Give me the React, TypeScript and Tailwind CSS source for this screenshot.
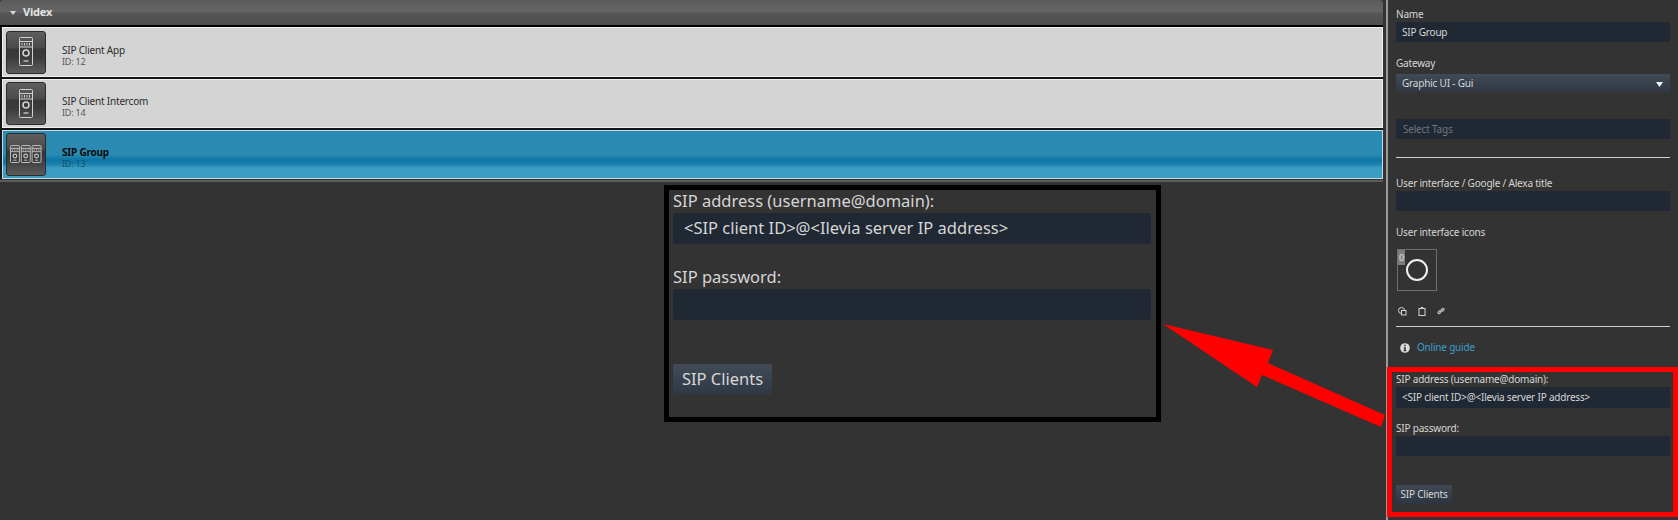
import React from "react";

function Single() {
  return (
    <svg width="16" height="30" viewBox="0 0 16 30" fill="none" stroke="#d0d0d0" strokeWidth="1">
      <rect x="1.5" y="0.5" width="13" height="28" rx="1" />
      <path d="M1.5 4.5h13M1.5 10h13" />
      <path d="M4 6v2.5M6.5 6v2.5M9 6v2.5M11.5 6v2.5" />
      <circle cx="8" cy="16" r="3" strokeWidth="1.6" />
      <path d="M5.5 24h5" strokeWidth="1.3" />
    </svg>
  );
}

function Group() {
  return (
    <svg width="32" height="19" viewBox="0 0 34 20" fill="none" stroke="#c4c4c4" strokeWidth="1">
      {[0, 11.5, 23].map((x) => (
        <g key={x} transform={`translate(${x} 0)`}>
          <rect x="0.5" y="0.5" width="9.5" height="18" rx="1" />
          <path d="M0.5 3.5h9.5M0.5 7h9.5M2.5 4.5v1.5M5 4.5v1.5M7.5 4.5v1.5" />
          <circle cx="5.2" cy="11.5" r="2" strokeWidth="1.3" />
          <path d="M3.5 16h3.5" />
        </g>
      ))}
    </svg>
  );
}

function Tile({ children }: { children: React.ReactNode }) {
  return (
    <div className="flex h-[43px] w-[40px] shrink-0 items-center justify-center rounded-[3px] border border-[#2b2b2b] bg-[linear-gradient(180deg,#5e5e5e_0%,#4a4a4a_38%,#383838_42%,#3a3a3a_60%,#5c5c5c_100%)]">
      {children}
    </div>
  );
}

function Row({ name, id, icon, active, h, mt }: { name: string; id: string; icon: React.ReactNode; active?: boolean; h: string; mt: string }) {
  return (
    <div
      className={
        active
          ? `flex ${h} items-center border border-[#c4dbe6] bg-[linear-gradient(180deg,#2b8bb3_0%,#2a8ab2_50%,#0c76a6_62%,#1a80ad_70%,#3a9bc0_78%,#3c9cc1_100%)] pl-[3px]`
          : `flex ${h} items-center border border-[#f0f0f0] bg-[#d4d4d4] pl-[3px]`
      }
    >
      <Tile>{icon}</Tile>
      <div className={`${mt} ml-4 flex flex-col`}>
        <span className={active ? "text-[10px] leading-[12px] font-bold text-[#0a0a0a]" : "text-[10px] leading-[12px] text-[#2c2c2c]"}>{name}</span>
        <span className={active ? "text-[9px] leading-[12px] text-[#12506f]" : "text-[9px] leading-[12px] text-[#555555]"}>{id}</span>
      </div>
    </div>
  );
}

function Field({ children, cls }: { children?: React.ReactNode; cls: string }) {
  return <div className={`flex items-center rounded-[1px] bg-[#202833] ${cls}`}>{children}</div>;
}

export default function App() {
  return (
    <div className="relative flex h-[520px] w-[1678px] overflow-hidden bg-[#333333] font-['Noto_Sans',sans-serif] tracking-[-0.2px]">
      <main className="flex w-[1385px] shrink-0 flex-col pr-[2px]">
        <div className="flex h-[25px] items-center rounded-t-[3px] bg-[linear-gradient(180deg,#5a5a5a_0%,#666666_48%,#565656_52%,#4e4e4e_100%)] pl-[10px]">
          <svg width="6" height="4" viewBox="0 0 6 4">
            <path d="M0 0h6L3 4z" fill="#d8d8d8" />
          </svg>
          <span className="ml-[7px] text-[11px] font-bold text-[#e4e4e4]">Videx</span>
        </div>
        <div className="flex flex-col gap-[2px] border-t-[2px] border-black bg-[#151515] pl-[2px]">
          <Row name="SIP Client App" id="ID: 12" icon={<Single />} h="h-[50px]" mt="mt-[8px]" />
          <Row name="SIP Client Intercom" id="ID: 14" icon={<Single />} h="h-[49px]" mt="mt-[6px]" />
          <Row name="SIP Group" id="ID: 13" icon={<Group />} h="h-[49px]" mt="mt-[6px]" active />
        </div>
        <div className="mt-px h-[2px] bg-[#5c5c5c]" />
      </main>

      <aside className="ml-px flex w-[292px] shrink-0 flex-col border-l-2 border-[#9a9a9a]">
        <div className="flex flex-col pr-2 pl-[8px] text-[10px] text-[#d6d6d6]">
          <span className="mt-[7px] leading-[15px]">Name</span>
          <Field cls="h-[20px] pl-[6px]">SIP Group</Field>
          <span className="mt-[14px] leading-[15px]">Gateway</span>
          <div className="mt-[3px] flex h-[18px] items-center justify-between bg-gradient-to-b from-[#414b56] to-[#2f3843] pr-[7px] pl-[6px]">
            <span>Graphic UI - Gui</span>
            <svg width="7" height="5" viewBox="0 0 7 5" className="mt-[3px]">
              <path d="M0 0h7L3.5 5z" fill="#f2f2f2" />
            </svg>
          </div>
          <Field cls="mt-[27px] h-[20px] pl-[7px] text-[#70767d]">Select Tags</Field>
          <div className="mt-[18px] h-px bg-[#d0d0d0]" />
          <span className="mt-[18px] leading-[15px]">User interface / Google / Alexa title</span>
          <Field cls="h-[20px]" />
          <span className="mt-[14px] leading-[15px]">User interface icons</span>
          <div className="relative mt-[9px] ml-px flex h-[42px] w-[40px] items-center justify-center border border-[#6e6e6e]">
            <span className="absolute top-0 left-0 flex h-[15px] w-[7px] items-center justify-center bg-[#7d7d7d] text-[9px] text-[#e4e4e4]">0</span>
            <span className="h-[22px] w-[22px] rounded-full border-2 border-[#f0f0f0]" />
          </div>
          <div className="mt-[14px] ml-[2px] flex h-[12px] items-center gap-[11px]">
            <svg width="9" height="9" viewBox="0 0 9 9" fill="none" stroke="#d4d4d4" strokeWidth="1">
              <circle cx="3.5" cy="3.5" r="3" />
              <rect x="3.5" y="3.5" width="4.5" height="4.5" fill="#333333" />
            </svg>
            <svg width="8" height="9" viewBox="0 0 8 9" fill="none" stroke="#d4d4d4" strokeWidth="1">
              <rect x="1" y="1.5" width="6" height="7" />
              <path d="M3 .5h2v1H3z" fill="#d4d4d4" />
            </svg>
            <svg width="8" height="8" viewBox="0 0 8 8" fill="none" stroke="#b4b4b4" strokeWidth="1.3">
              <path d="M2.6 5.4l2.8-2.8" />
              <rect x="0.9" y="4.2" width="3" height="2" rx="1" transform="rotate(-45 2.4 5.2)" />
              <rect x="4.1" y="1.8" width="3" height="2" rx="1" transform="rotate(-45 5.6 2.8)" />
            </svg>
          </div>
          <div className="mt-[9px] h-px bg-[#d0d0d0]" />
          <div className="mt-[13px] ml-[4px] flex h-[15px] items-center gap-[7px]">
            <svg width="10" height="10" viewBox="0 0 10 10">
              <circle cx="5" cy="5" r="4.8" fill="#dcdcdc" />
              <path d="M4.2 1.8h1.6v1.5H4.2zM3.6 4.2h2.2v3h.6v1H3.6v-1h.6v-2h-.6z" fill="#333333" />
            </svg>
            <span className="text-[#3d9dd0]">Online guide</span>
          </div>
        </div>

        <section className="mt-[12px] -ml-px flex h-[150px] flex-col border-[5px] border-[#ff0000] pr-[3px] pl-[4px] text-[10px] text-[#d6d6d6]">
          <span className="leading-[15px]">SIP address (username@domain):</span>
          <Field cls="h-[21px] pl-[6px]">&lt;SIP client ID&gt;@&lt;Ilevia server IP address&gt;</Field>
          <span className="mt-[13px] leading-[15px]">SIP password:</span>
          <Field cls="h-[20px]" />
          <button className="mt-[29px] flex h-[19px] w-[56px] items-center justify-center rounded-[1px] bg-gradient-to-b from-[#3f4955] to-[#2c3540] text-[10px] text-[#d6d6d6]">SIP Clients</button>
        </section>
      </aside>

      <div className="absolute top-[185px] left-[664px] flex h-[237px] w-[497px] flex-col border-[5px] border-black bg-[#333333] pr-[5px] pl-[4px] text-[16.5px] tracking-normal text-[#d6d6d6]">
        <span className="leading-[22px]">SIP address (username@domain):</span>
        <div className="mt-px flex h-[31px] items-center rounded-[3px] bg-[#202833] pl-[11px]">&lt;SIP client ID&gt;@&lt;Ilevia server IP address&gt;</div>
        <span className="mt-[22px] leading-[22px]">SIP password:</span>
        <div className="mt-px h-[31px] rounded-[3px] bg-[#202833]" />
        <button className="mt-[44px] flex h-[31px] w-[99px] items-center justify-center rounded-[2px] bg-gradient-to-b from-[#424c58] to-[#2e3742] text-[#d6d6d6]">SIP Clients</button>
      </div>

      <svg className="pointer-events-none absolute top-[320px] left-[1160px]" width="230" height="112" viewBox="1160 320 230 112">
        <polygon points="1163,324 1273,350 1268,363 1385,415 1381,427 1262,375 1257,387" fill="#ff0000" />
      </svg>
    </div>
  );
}
